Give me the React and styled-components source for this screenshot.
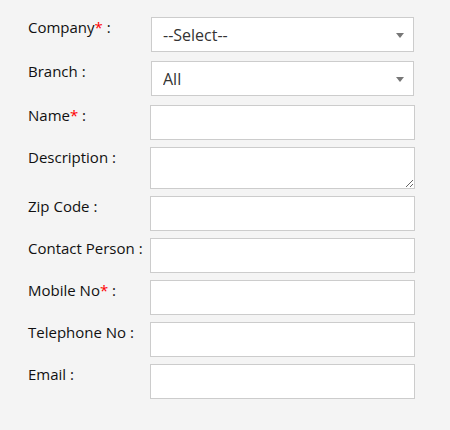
import React from "react";
import styled, { createGlobalStyle } from "styled-components";

const Global = createGlobalStyle`
  html, body { margin: 0; padding: 0; background: #f4f4f4; }
  body { font-family: "Open Sans", "Liberation Sans", sans-serif; }
`;

const Form = styled.form`
  display: flex;
  flex-direction: column;
  gap: 7px;
  padding: 17px 0 0 28px;
  width: 450px;
  height: 430px;
  box-sizing: border-box;
`;

const Row = styled.div`
  display: grid;
  grid-template-columns: 122px 265px;
  align-items: start;
  margin-bottom: ${(p) => (p.$extra ? "2px" : "0")};
`;

const Label = styled.label`
  font-size: 15px;
  line-height: 20px;
  color: #111;
  white-space: nowrap;
`;

const Star = styled.span`
  color: #f00;
`;

const SelectWrap = styled.div`
  position: relative;
  margin-left: 1px;
  width: 263px;
  &::after {
    content: "";
    position: absolute;
    right: 10px;
    top: 16px;
    border-left: 4px solid transparent;
    border-right: 4px solid transparent;
    border-top: 5px solid #777;
    pointer-events: none;
  }
`;

const Select = styled.select`
  appearance: none;
  -webkit-appearance: none;
  display: block;
  width: 100%;
  height: 35px;
  box-sizing: border-box;
  border: 1px solid #ccc;
  border-radius: 0;
  background: #fff;
  padding: 0 30px 0 11px;
  font-family: "Open Sans", "Liberation Sans", sans-serif;
  font-size: 16px;
  color: #333;
  outline: none;
`;

const Input = styled.input`
  display: block;
  width: 265px;
  height: 35px;
  box-sizing: border-box;
  border: 1px solid #ccc;
  border-radius: 0;
  background: #fff;
  padding: 0 10px;
  font-family: "Open Sans", "Liberation Sans", sans-serif;
  font-size: 14px;
  outline: none;
`;

const TextArea = styled.textarea`
  display: block;
  width: 265px;
  height: 42px;
  box-sizing: border-box;
  border: 1px solid #ccc;
  border-radius: 0;
  background: #fff;
  padding: 4px 10px;
  margin: 0;
  font-family: "Open Sans", "Liberation Sans", sans-serif;
  font-size: 14px;
  outline: none;
`;

const Field = ({ label, required, children, extra }) => (
  <Row $extra={extra}>
    <Label>
      {label}
      {required && <Star>*</Star>} :
    </Label>
    {children}
  </Row>
);

export default function App() {
  return (
    <>
      <Global />
      <Form onSubmit={(e) => e.preventDefault()}>
        <Field label="Company" required extra>
          <SelectWrap>
            <Select defaultValue="">
              <option value="">--Select--</option>
            </Select>
          </SelectWrap>
        </Field>
        <Field label="Branch" extra>
          <SelectWrap>
            <Select defaultValue="all">
              <option value="all">All</option>
            </Select>
          </SelectWrap>
        </Field>
        <Field label="Name" required>
          <Input type="text" />
        </Field>
        <Field label="Description">
          <TextArea />
        </Field>
        <Field label="Zip Code">
          <Input type="text" />
        </Field>
        <Field label="Contact Person">
          <Input type="text" />
        </Field>
        <Field label="Mobile No" required>
          <Input type="text" />
        </Field>
        <Field label="Telephone No">
          <Input type="text" />
        </Field>
        <Field label="Email">
          <Input type="text" />
        </Field>
      </Form>
    </>
  );
}
